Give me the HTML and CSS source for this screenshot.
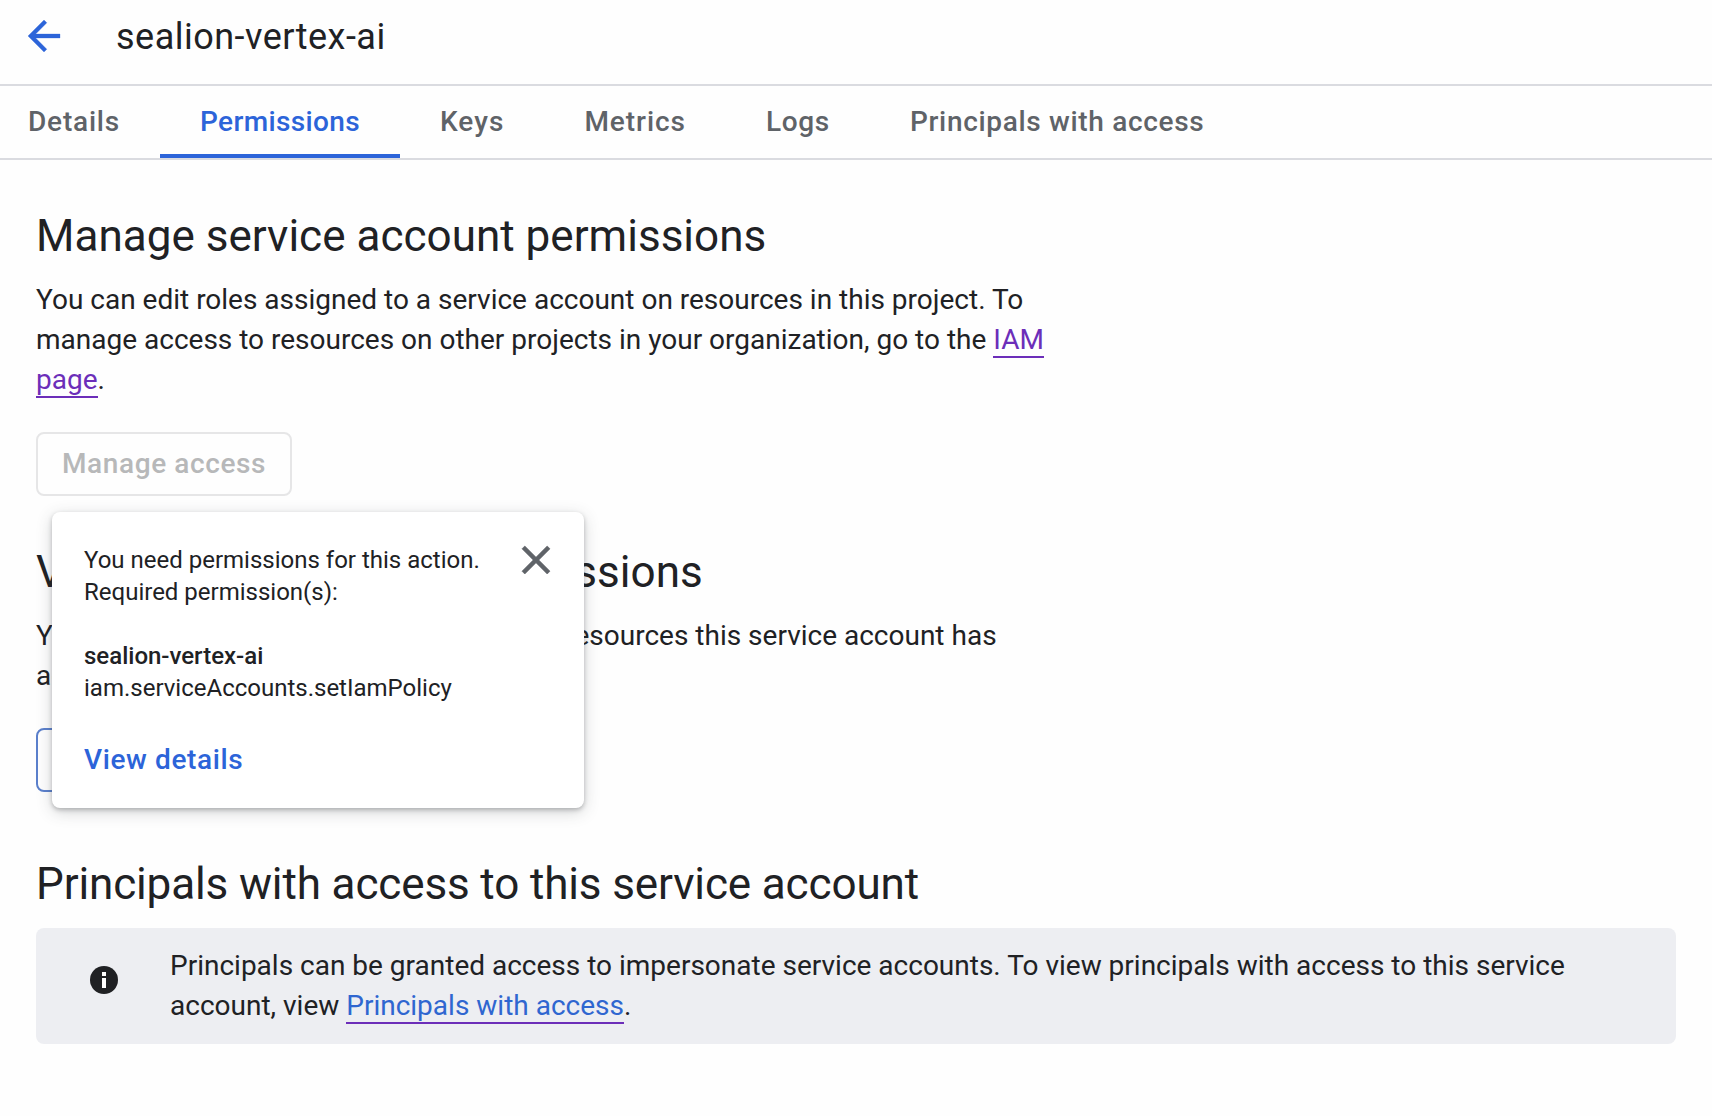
FILE: index.html
```html
<!DOCTYPE html>
<html lang="en">
<head>
<meta charset="utf-8">
<title>sealion-vertex-ai</title>
<link rel="stylesheet" href="styles.css">
</head>
<body>
<header class="topbar">
  <a class="back" href="#" aria-label="Back"><svg class="back-icon" viewBox="4 4 16 16"><path d="M20 11H7.83l5.59-5.59L12 4l-8 8 8 8 1.41-1.41L7.83 13H20v-2z"/></svg></a>
  <h1 class="title">sealion-vertex-ai</h1>
</header>
<nav class="tabs">
  <a class="tab tab-details">Details</a>
  <a class="tab tab-active">Permissions</a>
  <a class="tab tab-keys">Keys</a>
  <a class="tab tab-metrics">Metrics</a>
  <a class="tab tab-logs">Logs</a>
  <a class="tab tab-principals">Principals with access</a>
</nav>
<main class="content">
  <section class="section">
    <h2 class="heading">Manage service account permissions</h2>
    <p class="text">You can edit roles assigned to a service account on resources in this project. To<br>manage access to resources on other projects in your organization, go to the <a class="link visited" href="#">IAM<br>page</a>.</p>
    <div class="anchor">
      <button class="btn btn-disabled" disabled>Manage access</button>
      <div class="popup">
        <div class="popup-body">
          <p class="popup-text">You need permissions for this action.<br>Required permission(s):</p>
          <p class="popup-text"><strong class="resource">sealion-vertex-ai</strong><br>iam.serviceAccounts.setIamPolicy</p>
          <a class="details" href="#">View details</a>
        </div>
        <button class="close" aria-label="Close"><svg class="close-icon" viewBox="5 5 14 14"><path d="M19 6.41L17.59 5 12 10.59 6.41 5 5 6.41 10.59 12 5 17.59 6.41 19 12 13.41 17.59 19 19 17.59 13.41 12z"/></svg></button>
      </div>
    </div>
  </section>
  <section class="section">
    <h2 class="heading">View service account permissions</h2>
    <p class="text"><span class="lead">You can view and analyze permissions and</span> resources this service account has<br>access to.</p>
    <button class="btn">View access</button>
  </section>
  <section class="section">
    <h2 class="heading heading-tight">Principals with access to this service account</h2>
    <div class="info">
      <svg class="info-icon" viewBox="0 0 28 28"><circle cx="14" cy="14" r="14"/><path d="M12 6h4v4h-4zM12 12h4v10h-4z"/></svg>
      <p class="info-text">Principals can be granted access to impersonate service accounts. To view principals with access to this service<br>account, view <a class="link" href="#">Principals with access</a>.</p>
    </div>
  </section>
</main>
</body>
</html>
```
FILE: styles.css
```css
* { box-sizing: border-box; margin: 0; padding: 0; }
body { background: #fefefe; color: #202124; font-family: Roboto, "Liberation Sans", sans-serif; font-size: 28px; line-height: 40px; overflow: hidden; }
.topbar { display: flex; align-items: center; gap: 56px; height: 86px; padding: 0 28px 12px; border-bottom: 2px solid #dadbe0; }
.back { display: flex; }
.back-icon { width: 32px; height: 32px; fill: #2c64d9; stroke: #2c64d9; stroke-width: 0.15; overflow: visible; }
.title { padding-top: 1px; font-size: 36px; font-weight: 400; line-height: 48px; letter-spacing: 0.48px; }
.tabs { display: flex; height: 74px; border-bottom: 2px solid #dadbe0; }
.tab { padding: 16px 40px 0; border-bottom: 4px solid transparent; color: #5f6368; font-weight: 500; white-space: nowrap; }
.tab-details { padding-left: 28px; letter-spacing: 0.8px; }
.tab-active { color: #2c64d9; border-color: #2c64d9; letter-spacing: 0.36px; }
.tab-keys { letter-spacing: 1.05px; }
.tab-metrics { letter-spacing: 0.95px; }
.tab-logs { letter-spacing: 0.68px; }
.tab-principals { letter-spacing: 0.68px; }
.content { padding: 48px 36px 0; }
.section { margin-bottom: 48px; }
.section + .section { margin-bottom: 64px; }
.heading { margin-bottom: 16px; font-size: 44px; font-weight: 400; line-height: 56px; letter-spacing: 0.02px; }
.heading-tight { letter-spacing: -0.13px; }
.text { margin-bottom: 32px; white-space: nowrap; }
.lead { letter-spacing: -0.22px; }
.link { color: #2f66d0; text-decoration: none; border-bottom: 2px solid #6c2eb9; }
.visited { color: #6c2eb9; }
.anchor { position: relative; }
.btn { display: block; height: 64px; padding: 0 24px; border: 2px solid #5b80cc; border-radius: 8px; background: transparent; color: #2c64d9; font: 500 28px/60px Roboto, "Liberation Sans", sans-serif; }
.btn-disabled { border-color: #e6e6e7; color: #b7b8b9; letter-spacing: 0.6px; }
.popup { position: absolute; left: 16px; top: 80px; z-index: 1; display: flex; justify-content: space-between; width: 532px; height: 296px; padding: 32px; border-radius: 8px; background: #fff; box-shadow: 0 2px 4px rgba(60,64,67,.3), 0 4px 16px rgba(60,64,67,.22); }
.popup-text { margin-bottom: 32px; font-size: 24px; line-height: 32px; white-space: nowrap; }
.resource { font-weight: 500; }
.details { display: block; margin-top: 36px; color: #2c64d9; font-weight: 500; letter-spacing: 0.62px; text-decoration: none; }
.close { align-self: flex-start; display: flex; margin: 2px 2px 0 0; border: 0; background: none; }
.close-icon { width: 28px; height: 28px; fill: #5f6368; stroke: #5f6368; stroke-width: 0.3; stroke-linejoin: round; overflow: visible; }
.info { display: flex; align-items: flex-start; gap: 52px; height: 116px; padding: 18px 54px; border-radius: 8px; background: #edeef2; }
.info-icon { flex: none; width: 28px; height: 28px; margin-top: 20px; fill: #202124; }
.info-icon path { fill: #fff; }
.info-text { white-space: nowrap; }
```
